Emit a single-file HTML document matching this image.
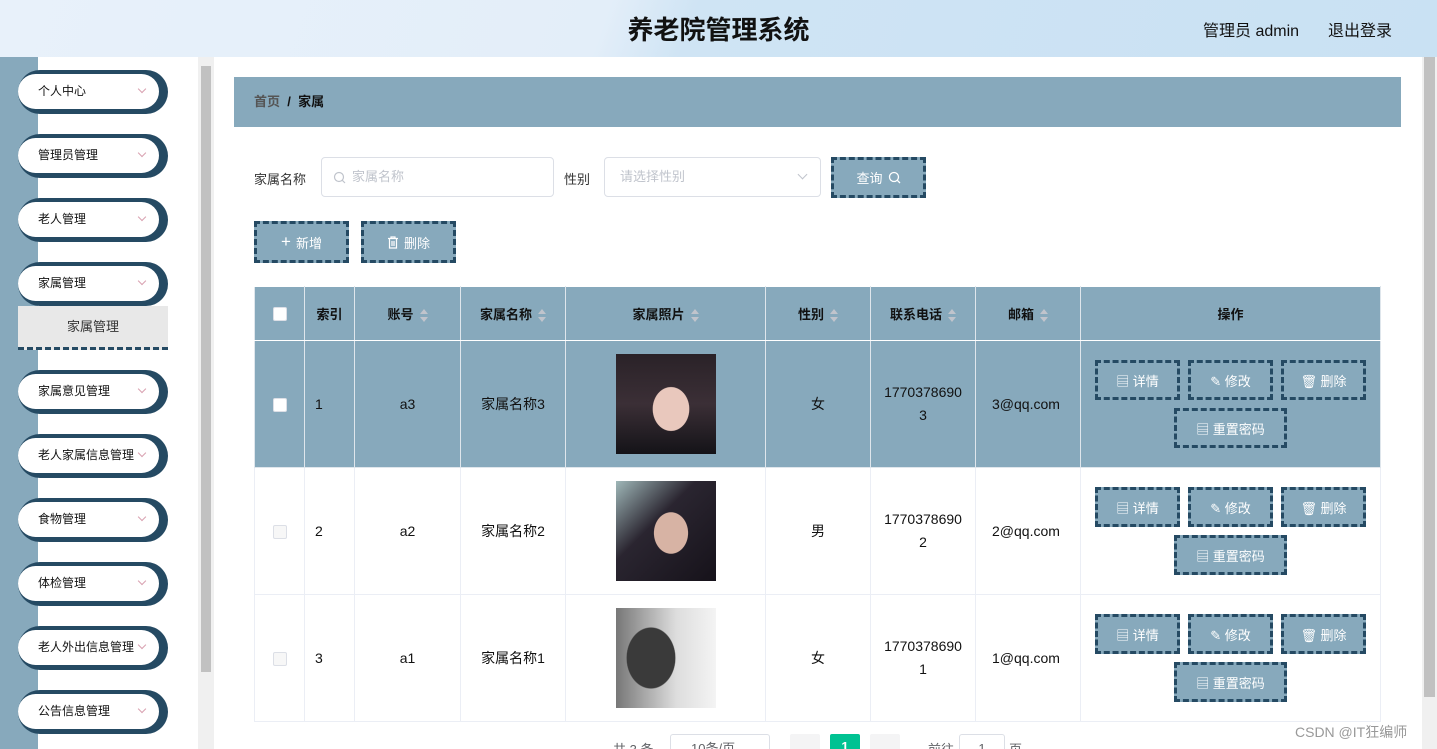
<!DOCTYPE html>
<html style="width:1437px;height:749px;overflow:hidden"><head><meta charset="utf-8"><style>
*{box-sizing:border-box;margin:0;padding:0}
body{width:1437px;height:749px;overflow:hidden;font-family:"Liberation Sans","Noto Sans CJK SC",sans-serif;font-size:13px;color:#333;background:#fff;position:relative}
.hdr{position:absolute;left:0;top:0;width:1437px;height:57px;background:linear-gradient(110deg,#e8f1fa 0%,#e3eef9 42%,#cfe4f4 48%,#c9e1f3 100%)}
.hdr .t{position:absolute;left:0;width:1437px;top:10px;text-align:center;font-size:26px;font-weight:bold;color:#111}
.hdr .r{position:absolute;top:17px;font-size:16px;color:#111}
.strip{position:absolute;left:0;top:57px;width:38px;height:692px;background:#87a9bc}
.sb{position:absolute;left:198px;top:57px;width:16px;height:692px;background:#f0f0f0}
.sb i{position:absolute;left:3px;top:9px;width:10px;height:606px;background:#c1c1c1}
.rsb{position:absolute;left:1422px;top:57px;width:15px;height:692px;background:#f0f0f0}
.rsb i{position:absolute;left:2px;top:0;width:11px;height:640px;background:#c1c1c1}
.mi{position:absolute;left:18px;width:150px;height:44px;background:#254a63;border-radius:22px}
.mi .in{position:absolute;left:0;top:4px;width:141px;height:35px;background:#fff;border-radius:18px;font-size:12px;color:#111;padding-left:20px;line-height:35px;white-space:nowrap}
.mi .ar{position:absolute;left:121px;top:16px;width:6px;height:6px;border-right:1px solid #d8a0b0;border-bottom:1px solid #d8a0b0;transform:rotate(45deg)}
.sub{position:absolute;left:18px;top:306px;width:150px;height:44px;background:#e8e8e8;border-bottom:3px dashed #254a63;text-align:center;line-height:42px;font-size:13px;color:#333}
.bc{position:absolute;left:234px;top:77px;width:1167px;height:50px;background:#87a9bc;font-size:13px;line-height:50px;padding-left:20px;font-weight:bold;color:#111}
.lbl{position:absolute;font-size:13px;color:#333}
.inp{position:absolute;border:1px solid #dcdfe6;border-radius:4px;height:40px;background:#fff;color:#c0c4cc;font-size:13px;line-height:38px}
.btn{position:absolute;background:#87a9bc;border:3px dashed #254a63;color:#fff;font-size:13px;text-align:center;display:flex;align-items:center;justify-content:center;gap:5px}
table{position:absolute;left:254px;top:286px;border-collapse:collapse;table-layout:fixed}
td,th{border:1px solid #ebeef5;text-align:center;font-size:13px;color:#111}
th{background:#87a9bc;height:54px;font-weight:bold;border-color:#fff #dfe6ec}
td{height:127px;padding:0 10px;word-break:break-all;line-height:23px;font-size:14px}
tr.hl td{background:#87a9bc;border-color:#dfe6ec}
.srt{display:inline-block;vertical-align:middle;margin-left:6px;width:8px;height:14px;position:relative}
.srt:before{content:"";position:absolute;left:0;top:0;border:4px solid transparent;border-bottom:5px solid #c0c4cc;border-top:0}
.srt:after{content:"";position:absolute;left:0;top:8px;border:4px solid transparent;border-top:5px solid #c0c4cc;border-bottom:0}
.cb{display:inline-block;width:14px;height:14px;border:1px solid #dcdfe6;border-radius:2px;background:#fff;vertical-align:middle}
.ph{width:100px;height:100px;margin:0 auto}
.pg{position:absolute;top:734px;font-size:13px;color:#606266}
.em{text-align:left;padding-left:16px}
</style></head><body>
<div class="hdr"><div class="t">养老院管理系统</div><div class="r" style="left:1203px">管理员 admin</div><div class="r" style="left:1328px">退出登录</div></div>
<div class="strip"></div>
<div class="sb"><i></i></div>
<div class="rsb"><i></i></div>

<div class="mi" style="top:70px"><div class="in">个人中心</div><div class="ar"></div></div>
<div class="mi" style="top:134px"><div class="in">管理员管理</div><div class="ar"></div></div>
<div class="mi" style="top:198px"><div class="in">老人管理</div><div class="ar"></div></div>
<div class="mi" style="top:262px"><div class="in">家属管理</div><div class="ar"></div></div>
<div class="sub">家属管理</div>
<div class="mi" style="top:370px"><div class="in">家属意见管理</div><div class="ar"></div></div>
<div class="mi" style="top:434px"><div class="in">老人家属信息管理</div><div class="ar"></div></div>
<div class="mi" style="top:498px"><div class="in">食物管理</div><div class="ar"></div></div>
<div class="mi" style="top:562px"><div class="in">体检管理</div><div class="ar"></div></div>
<div class="mi" style="top:626px"><div class="in">老人外出信息管理</div><div class="ar"></div></div>
<div class="mi" style="top:690px"><div class="in">公告信息管理</div><div class="ar"></div></div>

<div class="bc"><span style="color:#555">首页</span>&nbsp;&nbsp;/&nbsp;&nbsp;家属</div>

<div class="lbl" style="left:254px;top:169px">家属名称</div>
<div class="inp" style="left:321px;top:157px;width:233px;padding-left:30px">家属名称<svg style="position:absolute;left:11px;top:13px" width="13" height="13" viewBox="0 0 13 13"><circle cx="6" cy="6" r="4.5" fill="none" stroke="#c0c4cc" stroke-width="1.2"/><path d="M9.3 9.3L12 12" stroke="#c0c4cc" stroke-width="1.2"/></svg></div>
<div class="lbl" style="left:564px;top:169px">性别</div>
<div class="inp" style="left:604px;top:157px;width:217px;padding-left:15px">请选择性别<span style="position:absolute;right:14px;top:13px;width:7px;height:7px;border-right:1px solid #c0c4cc;border-bottom:1px solid #c0c4cc;transform:rotate(45deg)"></span></div>
<div class="btn" style="left:831px;top:157px;width:95px;height:41px">查询 <svg width="13" height="13" viewBox="0 0 13 13"><circle cx="6" cy="6" r="4.5" fill="none" stroke="#fff" stroke-width="1.3"/><path d="M9.3 9.3L12 12" stroke="#fff" stroke-width="1.3"/></svg></div>
<div class="btn" style="left:254px;top:221px;width:95px;height:42px"><span style="font-size:17px">+</span> 新增</div>
<div class="btn" style="left:361px;top:221px;width:95px;height:42px"><svg width="12" height="13" viewBox="0 0 12 13"><path d="M1 2.5h10M4 2.5V1h4v1.5M2.5 2.5v9.5h7V2.5M5 5v5M7 5v5" fill="none" stroke="#fff" stroke-width="1.2"/></svg> 删除</div>

<table>
<colgroup><col style="width:50px"><col style="width:50px"><col style="width:106px"><col style="width:105px"><col style="width:200px"><col style="width:105px"><col style="width:105px"><col style="width:105px"><col style="width:300px"></colgroup>
<tr><th><span class="cb"></span></th><th>索引</th><th>账号<span class="srt"></span></th><th>家属名称<span class="srt"></span></th><th>家属照片<span class="srt"></span></th><th>性别<span class="srt"></span></th><th>联系电话<span class="srt"></span></th><th>邮箱<span class="srt"></span></th><th>操作</th></tr>
<tr class="hl"><td><span class="cb"></span></td><td style="text-align:left">1</td><td>a3</td><td>家属名称3</td><td><div class="ph" style="background:radial-gradient(ellipse 30px 36px at 55% 55%,#e9c8bd 60%,transparent 62%),linear-gradient(180deg,#2a2228,#3b2f36 50%,#141318)"></div></td><td>女</td><td>17703786903</td><td class="em">3@qq.com</td><td></td></tr>
<tr><td><span class="cb" style="background:#f7f7f7"></span></td><td style="text-align:left">2</td><td>a2</td><td>家属名称2</td><td><div class="ph" style="background:radial-gradient(ellipse 28px 34px at 55% 52%,#d7b3a4 60%,transparent 62%),linear-gradient(135deg,#9fb7b8,#2a2530 40%,#16121a)"></div></td><td>男</td><td>17703786902</td><td class="em">2@qq.com</td><td></td></tr>
<tr><td><span class="cb" style="background:#f7f7f7"></span></td><td style="text-align:left">3</td><td>a1</td><td>家属名称1</td><td><div class="ph" style="background:radial-gradient(ellipse 40px 50px at 35% 50%,#3a3a3a 60%,transparent 62%),linear-gradient(90deg,#777,#ddd 60%,#f4f4f4)"></div></td><td>女</td><td>17703786901</td><td class="em">1@qq.com</td><td></td></tr>
</table>

<div class="btn" style="left:1095px;top:360px;width:85px;height:40px">▤ 详情</div>
<div class="btn" style="left:1188px;top:360px;width:85px;height:40px">✎ 修改</div>
<div class="btn" style="left:1281px;top:360px;width:85px;height:40px">🗑︎ 删除</div>
<div class="btn" style="left:1174px;top:408px;width:113px;height:40px">▤ 重置密码</div>
<div class="btn" style="left:1095px;top:487px;width:85px;height:40px">▤ 详情</div>
<div class="btn" style="left:1188px;top:487px;width:85px;height:40px">✎ 修改</div>
<div class="btn" style="left:1281px;top:487px;width:85px;height:40px">🗑︎ 删除</div>
<div class="btn" style="left:1174px;top:535px;width:113px;height:40px">▤ 重置密码</div>
<div class="btn" style="left:1095px;top:614px;width:85px;height:40px">▤ 详情</div>
<div class="btn" style="left:1188px;top:614px;width:85px;height:40px">✎ 修改</div>
<div class="btn" style="left:1281px;top:614px;width:85px;height:40px">🗑︎ 删除</div>
<div class="btn" style="left:1174px;top:662px;width:113px;height:40px">▤ 重置密码</div>

<div class="pg" style="left:613px;top:739px">共 3 条</div>
<div class="pg" style="left:670px;width:100px;height:30px;border:1px solid #dcdfe6;border-radius:3px;padding-left:20px;line-height:28px">10条/页</div>
<div class="pg" style="left:790px;width:30px;height:30px;background:#f4f4f5;border-radius:2px"></div>
<div class="pg" style="left:830px;width:30px;height:30px;background:#00c292;color:#fff;text-align:center;line-height:26px;font-weight:bold;border-radius:2px">1</div>
<div class="pg" style="left:870px;width:30px;height:30px;background:#f4f4f5;border-radius:2px"></div>
<div class="pg" style="left:928px;top:739px">前往</div>
<div class="pg" style="left:959px;width:46px;height:30px;border:1px solid #dcdfe6;border-radius:3px;text-align:center;line-height:28px">1</div>
<div class="pg" style="left:1009px;top:739px">页</div>
<div style="position:absolute;left:1295px;top:722px;font-size:14px;color:#999">CSDN @IT狂编师</div>
</body></html>
